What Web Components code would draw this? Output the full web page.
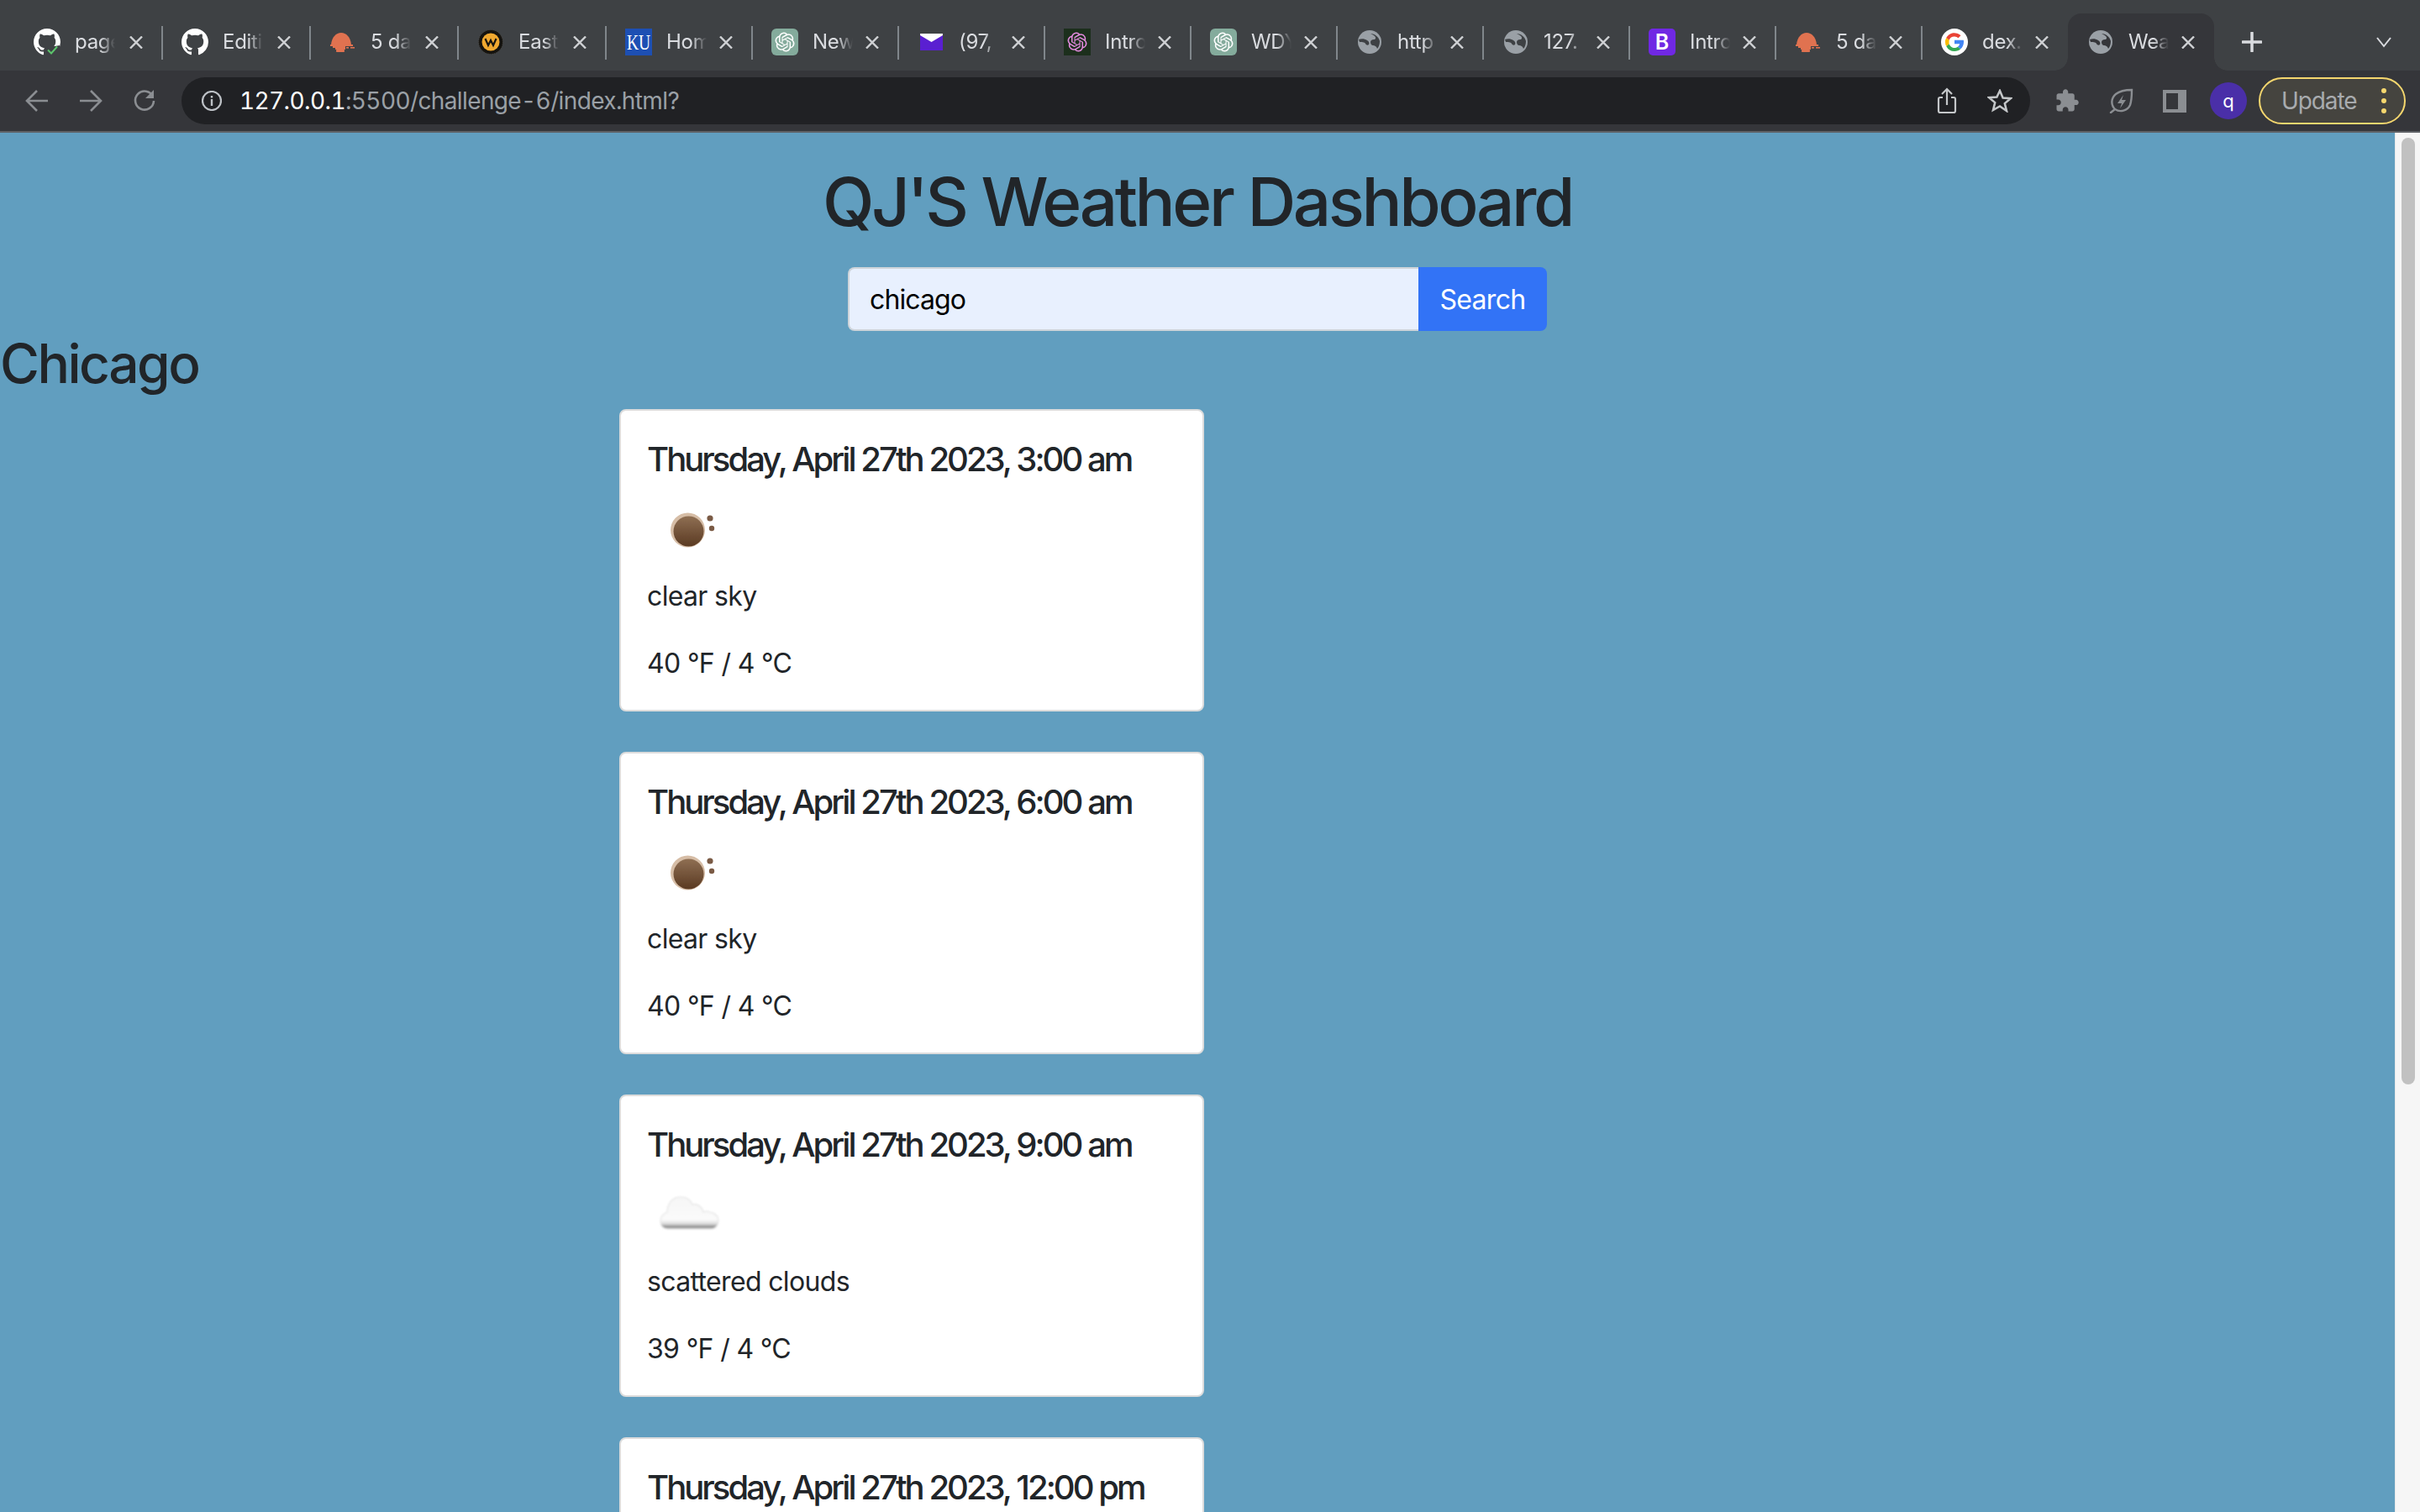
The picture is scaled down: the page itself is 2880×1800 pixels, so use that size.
<!DOCTYPE html>
<html lang="en">
<head>
<meta charset="utf-8">
<title>Weather Dashboard</title>
<style>
html,body{margin:0;padding:0;height:100%;overflow:hidden}
body{font-family:Inter,"Liberation Sans",Arial,sans-serif;color:#212529;background:#619ebf}
weather-app{height:1800px}
</style>
</head>
<body>
<weather-app>
  <browser-chrome slot="chrome"></browser-chrome>
  <weather-heading slot="page">QJ'S Weather Dashboard</weather-heading>
  <search-form slot="page" value="chicago"></search-form>
  <city-name slot="page">Chicago</city-name>
  <forecast-list slot="page">
    <forecast-card date="Thursday, April 27th 2023, 3:00 am" sky="clear sky" temp="40 °F / 4 °C" icon="moon"></forecast-card>
    <forecast-card date="Thursday, April 27th 2023, 6:00 am" sky="clear sky" temp="40 °F / 4 °C" icon="moon"></forecast-card>
    <forecast-card date="Thursday, April 27th 2023, 9:00 am" sky="scattered clouds" temp="39 °F / 4 °C" icon="cloud"></forecast-card>
    <forecast-card date="Thursday, April 27th 2023, 12:00 pm"></forecast-card>
  </forecast-list>
</weather-app>
<script>
const GH='M8 0C3.58 0 0 3.58 0 8c0 3.54 2.29 6.53 5.47 7.59.4.07.55-.17.55-.38 0-.19-.01-.82-.01-1.49-2.01.37-2.53-.49-2.69-.94-.09-.23-.48-.94-.82-1.13-.28-.15-.68-.52-.01-.53.63-.01 1.08.58 1.23.82.72 1.21 1.87.87 2.33.66.07-.52.28-.87.51-1.07-1.78-.2-3.64-.89-3.64-3.95 0-.87.31-1.59.82-2.15-.08-.2-.36-1.02.08-2.12 0 0 .67-.21 2.2.82.64-.18 1.32-.27 2-.27.68 0 1.36.09 2 .27 1.53-1.04 2.2-.82 2.2-.82.44 1.1.16 1.92.08 2.12.51.56.82 1.27.82 2.15 0 3.07-1.87 3.75-3.65 3.95.29.25.54.73.54 1.48 0 1.07-.01 1.93-.01 2.2 0 .21.15.46.55.38A8.013 8.013 0 0016 8c0-4.42-3.58-8-8-8z';
const OAI='M22.2819 9.8211a5.9847 5.9847 0 0 0-.5157-4.9108 6.0462 6.0462 0 0 0-6.5098-2.9A6.0651 6.0651 0 0 0 4.9807 4.1818a5.9847 5.9847 0 0 0-3.9977 2.9 6.0462 6.0462 0 0 0 .7427 7.0966 5.98 5.98 0 0 0 .511 4.9107 6.051 6.051 0 0 0 6.5146 2.9001A5.9847 5.9847 0 0 0 13.2599 24a6.0557 6.0557 0 0 0 5.7718-4.2058 5.9894 5.9894 0 0 0 3.9977-2.9001 6.0557 6.0557 0 0 0-.7475-7.0729zm-9.022 12.6081a4.4755 4.4755 0 0 1-2.8764-1.0408l.1419-.0804 4.7783-2.7582a.7948.7948 0 0 0 .3927-.6813v-6.7369l2.02 1.1686a.071.071 0 0 1 .038.052v5.5826a4.504 4.504 0 0 1-4.4945 4.4944zm-9.6607-4.1254a4.4708 4.4708 0 0 1-.5346-3.0137l.142.0852 4.783 2.7582a.7712.7712 0 0 0 .7806 0l5.8428-3.3685v2.3324a.0804.0804 0 0 1-.0332.0615L9.74 19.9502a4.4992 4.4992 0 0 1-6.1408-1.6464zM2.3408 7.8956a4.485 4.485 0 0 1 2.3655-1.9728V11.6a.7664.7664 0 0 0 .3879.6765l5.8144 3.3543-2.0201 1.1685a.0757.0757 0 0 1-.071 0l-4.8303-2.7865A4.504 4.504 0 0 1 2.3408 7.872zm16.5963 3.8558L13.1038 8.364 15.1192 7.2a.0757.0757 0 0 1 .071 0l4.8303 2.7913a4.4944 4.4944 0 0 1-.6765 8.1042v-5.6772a.79.79 0 0 0-.407-.667zm2.0107-3.0231l-.142-.0852-4.7735-2.7818a.7759.7759 0 0 0-.7854 0L9.409 9.2297V6.8974a.0662.0662 0 0 1 .0284-.0615l4.8303-2.7866a4.4992 4.4992 0 0 1 6.6802 4.66zM8.3065 12.863l-2.02-1.1638a.0804.0804 0 0 1-.038-.0567V6.0742a4.4992 4.4992 0 0 1 7.3757-3.4537l-.142.0805L8.704 5.459a.7948.7948 0 0 0-.3927.6813zm1.0976-2.3654l2.602-1.4998 2.6069 1.4998v2.9994l-2.5974 1.4997-2.6067-1.4997Z';
const GLOBE=bg=>`<circle cx="16" cy="16" r="14" fill="#9aa0a6"/><path d="M3 13c3-1 7-1 10 1 2 1 3 3 2 5-1 1-3 1-4-1-1-2-5-2-7-2zM17 16c0-2 2-3 4-3s3-2 1-4c-1-1-3-2-5-3 5 0 10 4 11 9 0 3-1 7-3 9-1-3-3-4-5-4s-3-2-3-4z" fill="${bg}"/>`;
const CLOCHE='<path d="M2 19C3 10 8 5 14 5s11 5 12 14z" fill="#e07250"/><rect x="1" y="19" width="27" height="2" fill="#e07250"/><rect x="4" y="21" width="15" height="2" fill="#e07250"/><rect x="20" y="22" width="3" height="1.600" fill="#e07250"/><rect x="25" y="22" width="5" height="1.600" fill="#e07250"/><rect x="7" y="23" width="12" height="2" fill="#e07250"/><rect x="8" y="25" width="10" height="3" rx="1" fill="#e07250"/>';
const ICONS={
 gitpass:`<path transform="scale(2)" d="${GH}" fill="#fff"/><path d="M15 32l-2-6 4-5h8l6-1v6l-6 6z" fill="#3e4144"/><path d="M17 25.500l4 4 7-8" fill="none" stroke="#5cc46c" stroke-width="2"/>`,
 github:`<path transform="scale(2)" d="${GH}" fill="#fff"/>`,
 cloche:CLOCHE,
 east:'<circle cx="16" cy="16" r="14.500" fill="#15130f" stroke="#4a4a48" stroke-width="1" stroke-dasharray="1.500 1"/><circle cx="16" cy="16" r="10.500" fill="#f0a830"/><path d="M9.500 12l3.500 8 3-6 3 6 3.500-8" fill="none" stroke="#15130f" stroke-width="2.200"/>',
 ku:'<rect width="32" height="32" fill="#1d4fb3"/><text transform="scale(.78 1)" x="20.500" y="25" text-anchor="middle" font-family="Liberation Serif" font-size="25" fill="#fff">KU</text>',
 gpt:`<rect width="32" height="32" rx="6" fill="#84ab9c"/><path transform="translate(4.500 4.500) scale(.96)" d="${OAI}" fill="#fff"/>`,
 mail:'<rect x="3" y="6" width="27" height="20" fill="#5a1fd1"/><path d="M3 6h27v2L16.500 16 3 8z" fill="#fff"/>',
 gptdark:`<rect width="32" height="32" fill="#1c2f1c"/><path transform="translate(4.500 4.500) scale(.96)" d="${OAI}" fill="#e58be0"/>`,
 globe:GLOBE('#3e4144'),
 globeA:GLOBE('#35363a'),
 bs:'<rect width="32" height="32" rx="5" fill="#7028e4"/><text x="16" y="25" text-anchor="middle" font-family="Inter" font-weight="600" font-size="25" fill="#fff">B</text>',
 google:'<circle cx="16" cy="16" r="16" fill="#fff"/><path d="M16 9.500a6.500 6.500 0 0 1 4.500 1.700l3-3A11 11 0 0 0 6.200 11l3.500 2.700A6.500 6.500 0 0 1 16 9.500z" fill="#ea4335"/><path d="M9.700 18.300 6.200 21A11 11 0 0 0 16 27c3 0 5.500-1 7.300-2.700l-3.400-2.600A6.500 6.500 0 0 1 9.700 18.300z" fill="#34a853"/><path d="M9.500 16c0-.8.100-1.600.4-2.300L6.200 11a11 11 0 0 0 0 10l3.500-2.700c-.1-.7-.2-1.500-.2-2.300z" fill="#fbbc05"/><path d="M27 16c0-.8-.1-1.500-.2-2.200H16v4.400h6.200a5.300 5.300 0 0 1-2.300 3.500l3.400 2.600C25.500 22.300 27 19.400 27 16z" fill="#4285f4"/>'
};
const TABS=[['gitpass','page'],['github','Editi'],['cloche','5 da'],['east','East'],['ku','Hom'],['gpt','New'],['mail','(97,'],['gptdark','Intro'],['gpt','WDY'],['globe','http'],['globe','127.'],['bs','Intro'],['cloche','5 da'],['google','dex.'],['globeA','Wea']];

function def(name,css,html,init){
  customElements.define(name,class extends HTMLElement{
    connectedCallback(){
      if(this.shadowRoot)return;
      const s=this.attachShadow({mode:'open'});
      s.innerHTML=`<style>${css}</style>`+(typeof html==='function'?html(this):html);
      if(init)init(this,s);
    }
  });
}
def('weather-app',`
:host{display:flex;flex-direction:column;width:2880px}
.view{display:flex;height:1642px;overflow:hidden}
.page{flex:1;min-width:0;background:#619ebf;overflow:hidden}
.bar{width:30px;flex:none;background:#f6f6f6;border-left:1px solid #e8e8e8;box-sizing:border-box;padding:6px 6px 0 7px}
.thumb{height:1127px;background:#c1c1c1;border-radius:8px}
`,`<slot name="chrome"></slot><div class="view"><div class="page"><slot name="page"></slot></div><div class="bar"><div class="thumb"></div></div></div>`);

def('browser-tab',`
:host{display:flex;align-items:center;height:68px;flex:none;box-sizing:border-box;padding:0 23px 0 23px;position:relative;font-size:24px}
:host([active]){background:#35363a;border-radius:16px 16px 0 0}
:host([active]) .sep,:host([nosep]) .sep{display:none}
:host([active])::before,:host([active])::after{content:"";position:absolute;bottom:0;width:16px;height:16px;background:radial-gradient(circle at 0 0,transparent 15.500px,#35363a 16px)}
:host([active])::before{left:-16px}
:host([active])::after{right:-16px;background:radial-gradient(circle at 100% 0,transparent 15.500px,#35363a 16px)}
svg.f{width:32px;height:32px;flex:none;margin-right:17px}
.t{width:64px;margin-right:-16px;flex:none;white-space:nowrap;-webkit-mask-image:linear-gradient(90deg,#000 30px,transparent 48px);mask-image:linear-gradient(90deg,#000 30px,transparent 48px);line-height:32px;color:#dadce0;letter-spacing:-.3px}
svg.x{width:16px;height:15px;margin-left:auto;flex:none}
.sep{position:absolute;right:-1px;top:15px;height:40px;width:2px;background:#80868b}
`,h=>`<svg class="f" viewBox="0 0 32 32">${ICONS[h.getAttribute('icon')]}</svg><span class="t">${h.getAttribute('label')}</span><svg class="x" viewBox="0 0 16 15"><path d="M1 .5l14 14M15 .5l-14 14" stroke="#d0d2d5" stroke-width="2.400" fill="none"/></svg><i class="sep"></i>`);

def('browser-chrome',`
:host{display:block;background:#35363a;font-family:Inter,"Liberation Sans",Arial,sans-serif}
.strip{height:84px;background:#3e4144;box-sizing:border-box;padding:16px 0 0 17px;display:flex}
.plus{width:44px;height:68px;margin-left:23px;display:flex;align-items:center;justify-content:center;flex:none}
.chev{margin-left:auto;margin-right:34px;height:68px;display:flex;align-items:center}
.tools{height:72px;box-sizing:border-box;display:flex;align-items:center}
.nav{width:64px;flex:none;display:flex;justify-content:center}
.nav:first-child{margin-left:12px}
.url{width:2200px;margin-left:12px;height:56px;background:#202124;border-radius:28px;display:flex;align-items:center;box-sizing:border-box;padding:0 0 0 24px;flex:none;font-size:28px;color:#9aa0a6;font-variant-numeric:tabular-nums;letter-spacing:-.62px}
.url b{font-weight:400;color:#fff}
.url .addr{margin-left:21px;flex:1;white-space:nowrap}
.u2{width:63px;display:flex;justify-content:center;flex:none}
.u2.last{margin-right:5px}
.t{width:64px;display:flex;justify-content:center;flex:none}
.ava{width:44px;height:44px;border-radius:50%;background:#4a2fa8;color:#fff;display:flex;align-items:center;justify-content:center;font-size:22px;flex:none;margin-left:10px}
.up{width:175px;height:56px;box-sizing:border-box;border:2px solid #f5d76e;border-radius:28px;background:#45443f;display:flex;align-items:center;color:#a8abae;font-size:28px;letter-spacing:-1.100px;padding-left:25px;flex:none;margin-left:14px}
.dots{position:absolute;margin-left:119px;display:flex;flex-direction:column;gap:6px}
.dots i{display:block;width:6px;height:6px;border-radius:50%;background:#f5d76e}
.hair{height:2px;background:#5f6266}
`,()=>`<div class="strip">${TABS.map((t,i)=>`<browser-tab style="width:${i<4?176:174}px" icon="${t[0]}" label="${t[1]}" ${i===14?'active':''} ${i===13?'nosep':''}></browser-tab>`).join('')}
<div class="plus"><svg width="24" height="24" viewBox="0 0 24 24"><path d="M12 1v22M1 12h22" stroke="#dadce0" stroke-width="3.500" stroke-linecap="round"/></svg></div>
<div class="chev"><svg width="18" height="14" viewBox="0 0 18 14"><path d="M1 2l8 10 8-10" fill="none" stroke="#dadce0" stroke-width="2"/></svg></div></div>
<div class="tools">
<div class="nav"><svg width="28" height="28" viewBox="0 0 28 28"><path d="M27 14H3M14 2L2 14l12 12" fill="none" stroke="#8b8e92" stroke-width="2.600"/></svg></div>
<div class="nav" style="margin-left:0"><svg width="28" height="28" viewBox="0 0 28 28"><path d="M1 14h24M14 2l12 12-12 12" fill="none" stroke="#8b8e92" stroke-width="2.600"/></svg></div>
<div class="nav" style="margin-left:0"><svg width="28" height="28" viewBox="0 0 28 28"><path d="M24 9A11 11 0 1 0 25 14" fill="none" stroke="#8b8e92" stroke-width="2.600"/><path d="M25 1v10H15z" fill="#8b8e92"/></svg></div>
<div class="url"><svg width="24" height="24" viewBox="0 0 24 24"><circle cx="12" cy="12" r="11" fill="none" stroke="#bdc1c6" stroke-width="2.200"/><path d="M12 10v8M12 6v2.600" stroke="#bdc1c6" stroke-width="2.400"/></svg><span class="addr"><b>127.0.0.1</b>:5500/challenge-6/index.html?</span>
<div class="u2"><svg width="24" height="32" viewBox="0 0 24 32"><path d="M7 12H4a2 2 0 0 0-2 2v14a2 2 0 0 0 2 2h16a2 2 0 0 0 2-2V14a2 2 0 0 0-2-2h-3M12 21V3M6 8l6-6 6 6" fill="none" stroke="#c4c7c9" stroke-width="2.200"/></svg></div>
<div class="u2 last"><svg width="30" height="28" viewBox="0 0 30 28"><path d="M15 2l3.600 8.500 9.200.7-7 5.900 2.200 8.900L15 20.500 7 25l2.200-8.900-7-5.900 9.200-.7z" fill="none" stroke="#c4c7c9" stroke-width="2.500"/></svg></div></div>
<div class="t" style="margin-left:12px"><svg width="30" height="30" viewBox="0 0 24 24"><path fill="#8b8e92" d="M20.500 11H19V7c0-1.100-.9-2-2-2h-4V3.500C13 2.120 11.880 1 10.500 1S8 2.120 8 3.500V5H4c-1.100 0-1.990.9-1.990 2v3.800H3.500c1.490 0 2.700 1.210 2.700 2.700s-1.210 2.700-2.700 2.700H2V20c0 1.100.9 2 2 2h3.800v-1.500c0-1.490 1.210-2.700 2.700-2.700 1.490 0 2.700 1.210 2.700 2.700V22H17c1.100 0 2-.9 2-2v-4h1.500c1.380 0 2.500-1.120 2.500-2.500S21.880 11 20.500 11z"/></svg></div>
<div class="t"><svg width="30" height="30" viewBox="0 0 30 30"><path d="M28 2c0 0 0 12-2 18-3 7-12 9-18 5C3 20 3 12 9 7 14 3 23 2 28 2zM8 25l-5 4" fill="none" stroke="#8b8e92" stroke-width="2.400" stroke-linecap="round"/><path d="M18 8l-7 10h5l-2 6 7-10h-5z" fill="#8b8e92"/></svg></div>
<div class="t"><svg width="28" height="27" viewBox="0 0 28 27"><path d="M0 0h28v27H0zM4 4v19h14V4z" fill="#8b8e92" fill-rule="evenodd"/></svg></div>
<div class="ava">q</div>
<div class="up">Update<span class="dots"><i></i><i></i><i></i></span></div>
</div><div class="hair"></div>`);

def('weather-heading',`
:host{display:block;text-align:center;font-size:80px;line-height:96px;font-weight:500;padding-top:34px;color:#212529;letter-spacing:-3.400px}
`,`<slot></slot>`);
def('search-form',`
:host{display:flex;justify-content:center;margin-top:30px}
input{width:679px;height:76px;box-sizing:border-box;border:2px solid #ced4da;border-right:0;border-radius:8px 0 0 8px;background:#e8f0fe;font:32px Inter,"Liberation Sans",Arial,sans-serif;letter-spacing:-.9px;color:#000;padding:0 24px;outline:0}
button{width:153px;height:76px;border:0;border-radius:0 8px 8px 0;background:#3273f6;color:#fff;font:32px Inter,"Liberation Sans",Arial,sans-serif;letter-spacing:-.7px;padding:0}
`,h=>`<input type="text" value="${h.getAttribute('value')}" aria-label="City"><button type="button">Search</button>`);
def('city-name',`
:host{display:block;font-size:64px;line-height:76px;margin-top:1px;color:#212529;font-weight:500;letter-spacing:-2.500px}
`,`<slot></slot>`);
def('forecast-list',`
:host{display:flex;flex-direction:column;gap:48px;margin:16px 0 0 737px;width:696px}
`,`<slot></slot>`);
const MOON=`<svg width="100" height="97" viewBox="0 0 100 97"><defs><linearGradient id="m" x1="0" y1="0" x2="0" y2="1"><stop offset="0" stop-color="#8f6f53"/><stop offset="1" stop-color="#5a3a22"/></linearGradient><filter id="b" x="-20%" y="-20%" width="140%" height="140%"><feGaussianBlur stdDeviation=".6"/></filter></defs><g filter="url(#b)"><circle cx="47.500" cy="59" r="20.500" fill="#d6bda6"/><circle cx="48.500" cy="60.500" r="18" fill="url(#m)"/><circle cx="74" cy="45" r="3.600" fill="#7a5a44"/><circle cx="76" cy="57" r="3.200" fill="#7a5a44"/></g></svg>`;
const CLOUD=`<svg width="100" height="97" viewBox="0 0 100 97"><defs><linearGradient id="c" gradientUnits="userSpaceOnUse" x1="0" y1="36" x2="0" y2="76"><stop offset="0" stop-color="#f6f6f6"/><stop offset=".7" stop-color="#fafafa"/><stop offset=".82" stop-color="#dddddd"/><stop offset=".92" stop-color="#8c8c8c"/><stop offset="1" stop-color="#cfcfcf"/></linearGradient><filter id="d" x="-20%" y="-20%" width="140%" height="140%"><feGaussianBlur stdDeviation=".8"/></filter></defs><path filter="url(#d)" d="M24 75c-6 0-9-4-9-9 0-5 3-9 8-11 0-11 7-18 16-18 7 0 12 4 14 9 4-1 11 1 13 9 2-1 5-1 8 0 6 1 10 5 10 10 0 6-4 10-8 10z" fill="url(#c)" stroke="#e4e4e4" stroke-width="1.200"/></svg>`;
def('forecast-card',`
:host{display:block;height:360px;box-sizing:border-box;background:#fff;border:2px solid #dcdcdc;border-radius:8px;padding:34px 31px 0 31px;color:#212529;font-size:32px;flex:none}
h5{margin:0;font-size:40px;line-height:48px;font-weight:500;letter-spacing:-2.960px;white-space:nowrap}
.i{height:98px;padding:1px 0 0 1px;display:flex}
p{margin:16px 0 0;line-height:48px;letter-spacing:-.65px}
p+p{margin-top:32px}
`,h=>{const ic=h.getAttribute('icon');return `<h5>${h.getAttribute('date')}</h5>`+(ic?`<div class="i">${ic==='moon'?MOON:CLOUD}</div><p>${h.getAttribute('sky')}</p><p>${h.getAttribute('temp')}</p>`:'')});
</script>
</body>
</html>
